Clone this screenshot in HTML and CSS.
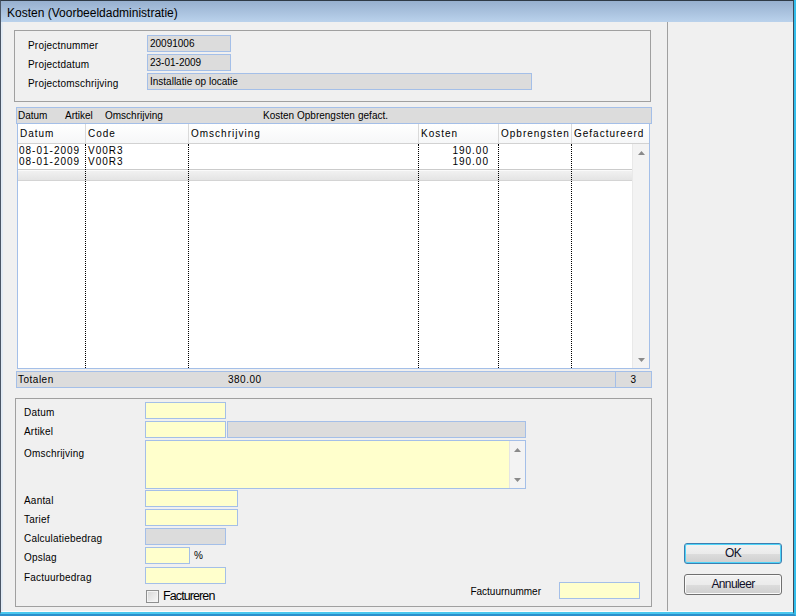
FILE: index.html
```html
<!DOCTYPE html>
<html>
<head>
<meta charset="utf-8">
<title>Kosten</title>
<link rel="stylesheet" href="styles.css">
</head>
<body>
<div class="window">
  <div class="frame">
    <div class="titlebar">Kosten (Voorbeeldadministratie)</div>
    <div class="client">
      <div class="main">
        <div class="group project">
          <div class="prow"><span class="lbl">Projectnummer</span><span class="fld ro w84">20091006</span></div>
          <div class="prow"><span class="lbl">Projectdatum</span><span class="fld ro w84">23-01-2009</span></div>
          <div class="prow"><span class="lbl">Projectomschrijving</span><span class="fld ro w385">Installatie op locatie</span></div>
        </div>

        <div class="listhead">
          <span class="lh1">Datum</span><span class="lh2">Artikel</span><span class="lh3">Omschrijving</span><span class="lh4">Kosten</span><span class="lh5">Opbrengsten</span><span>gefact.</span>
        </div>

        <div class="grid">
          <div class="ghead">
            <div class="hc c1">Datum</div>
            <div class="hc c2">Code</div>
            <div class="hc c3">Omschrijving</div>
            <div class="hc c4">Kosten</div>
            <div class="hc c5">Opbrengsten</div>
            <div class="hc c6h">Gefactureerd</div>
          </div>
          <div class="gbody">
            <div class="col c1"><div class="cell">08-01-2009</div><div class="cell">08-01-2009</div></div>
            <div class="col c2"><div class="cell">V00R3</div><div class="cell">V00R3</div></div>
            <div class="col c3"><div class="cell"></div><div class="cell"></div></div>
            <div class="col c4"><div class="cell num">190.00</div><div class="cell num">190.00</div></div>
            <div class="col c5"><div class="cell"></div><div class="cell"></div></div>
            <div class="col c6"><div class="cell"></div><div class="cell"></div></div>
            <div class="vscroll">
              <svg class="arrow" width="7" height="4" viewBox="0 0 7 4"><polygon points="3.5,0 7,4 0,4"/></svg>
              <svg class="arrow" width="7" height="4" viewBox="0 0 7 4"><polygon points="0,0 7,0 3.5,4"/></svg>
            </div>
          </div>
        </div>

        <div class="totals">
          <span class="tot-l">Totalen</span><span class="tot-v">380.00</span><span class="tot-n">3</span>
        </div>

        <div class="group entry">
          <span class="lbl r1">Datum</span>
          <span class="fld yl w81 r1 f2">&nbsp;</span>

          <span class="lbl r2">Artikel</span>
          <div class="pair r2 f23"><span class="fld yl w81"></span><span class="fld ro w299"></span></div>

          <span class="lbl r3 lbl-top">Omschrijving</span>
          <div class="memo r3 f23">
            <div class="memo-text"></div>
            <div class="memo-scroll">
              <svg class="arrow" width="7" height="4" viewBox="0 0 7 4"><polygon points="3.5,0 7,4 0,4"/></svg>
              <svg class="arrow" width="7" height="4" viewBox="0 0 7 4"><polygon points="0,0 7,0 3.5,4"/></svg>
            </div>
          </div>

          <span class="lbl r4">Aantal</span>
          <span class="fld yl w93 r4 f2"></span>

          <span class="lbl r5">Tarief</span>
          <span class="fld yl w93 r5 f2"></span>

          <span class="lbl r6">Calculatiebedrag</span>
          <span class="fld ro w81 r6 f2"></span>

          <span class="lbl r7">Opslag</span>
          <div class="pair r7 f23"><span class="fld yl w45"></span><span class="pct">%</span></div>

          <span class="lbl r8">Factuurbedrag</span>
          <span class="fld yl w81 r8 f2"></span>

          <label class="check r9 f23"><span class="box"></span><span class="check-text">Factureren</span></label>

          <div class="invoice">
            <span class="inv-lbl">Factuurnummer</span>
            <span class="fld yl w81"></span>
          </div>
        </div>
      </div>

      <div class="side">
        <button class="btn ok">OK</button>
        <button class="btn">Annuleer</button>
      </div>
    </div>
  </div>
</div>
</body>
</html>
```

FILE: styles.css
```css
* { box-sizing: border-box; }

html, body {
  margin: 0;
  padding: 0;
}

body {
  width: 796px;
  height: 616px;
  overflow: hidden;
  background: #f0f0f0;
  font-family: "Liberation Sans", Arial, sans-serif;
  font-size: 10px;
  color: #000;
}

.window {
  width: 796px;
  height: 616px;
  border-right: 2px solid #33bdea;
  border-bottom: 2px solid #2b8fcc;
}

.frame {
  width: 794px;
  height: 614px;
  border-top: 1px solid #2f3a46;
  border-left: 1px solid #4a5666;
  border-right: 1px solid #3a4a5c;
  border-bottom: 2px solid #49c8ef;
  display: flex;
  flex-direction: column;
}

.titlebar {
  height: 21px;
  flex: none;
  background: linear-gradient(#97b0cf, #bad2ec);
  padding: 4px 0 0 6px;
  line-height: 17px;
  font-size: 12px;
  white-space: nowrap;
  overflow: hidden;
}

.client {
  flex: 1;
  display: flex;
  border-left: 2px solid #e2ebf5;
  border-bottom: 1px solid #fbfbfb;
  background: #f0f0f0;
}

.main {
  width: 664px;
  flex: none;
  display: flex;
  flex-direction: column;
}

.side {
  flex: 1;
  border-left: 1px solid #a0a0a0;
  display: flex;
  flex-direction: column;
  justify-content: flex-end;
  gap: 10px;
  padding: 0 0 16px 16px;
}

/* group boxes */
.group {
  border: 1px solid #a0a0a0;
  width: 637px;
}

.project {
  margin: 8px 0 0 11px;
  padding: 4px 0 11px 13px;
  display: flex;
  flex-direction: column;
  gap: 2px;
}

.prow {
  display: flex;
  height: 17px;
}

.prow .lbl { width: 119px; }

.lbl {
  padding-top: 2px;
  line-height: 17px;
  white-space: nowrap;
  letter-spacing: 0.2px;
}

.fld {
  display: block;
  height: 17px;
  border: 1px solid #a4bfe8;
  padding: 1px 0 0 2px;
  line-height: 14px;
  white-space: nowrap;
  overflow: hidden;
}

.ro { background: #dcdcdc; }
.yl { background: #ffffcc; }

.w81 { width: 81px; }
.w84 { width: 84px; }
.w93 { width: 93px; }
.w45 { width: 45px; }
.w299 { width: 299px; }
.w385 { width: 385px; }

/* list header strip */
.listhead {
  margin: 5px 0 0 13px;
  width: 636px;
  height: 17px;
  border: 1px solid #a4bfe8;
  background: #dcdcdc;
  padding-left: 1px;
  line-height: 15px;
  white-space: nowrap;
}

.listhead span { display: inline-block; }
.lh1 { width: 47px; }
.lh2 { width: 40px; }
.lh3 { width: 158px; }
.lh4 { width: 34px; }
.lh5 { width: 61px; }

/* grid */
.grid {
  margin-left: 14px;
  width: 633px;
  border: 1px solid #a4bfe8;
  border-top: none;
  background: #fff;
  letter-spacing: 1px;
}

.ghead {
  display: flex;
  height: 20px;
  border-bottom: 1px solid #d2d2d2;
  background: linear-gradient(#ffffff, #f6f7f8);
}

.hc {
  line-height: 19px;
  padding-left: 2px;
  border-right: 1px solid #dadada;
  white-space: nowrap;
  overflow: hidden;
}

.c1 { width: 68px; }
.c2 { width: 103px; }
.c3 { width: 230px; }
.c4 { width: 80px; }
.c5 { width: 73px; }
.c6 { width: 60px; }
.c6h { width: 77px; border-right: none; }

.gbody {
  display: flex;
  height: 224px;
}

.col {
  padding-top: 1px;
  border-right: 1px dotted #000;
  background-color: #fff;
  background-image: linear-gradient(#cbcbcb 0 1px, #fafafa 1px 2px, #f1f1f1 2px, #e4e4e4 11px, #d4d4d4 11px 12px);
  background-repeat: no-repeat;
  background-origin: border-box;
  background-position: 0 25px;
  background-size: 100% 12px;
}

.c6 { border-right: none; }

.cell {
  height: 11px;
  line-height: 11px;
  white-space: nowrap;
}

.c1 .cell { padding-left: 1px; }
.c2 .cell { padding-left: 2px; }
.cell.num { text-align: right; padding-right: 9px; }

.vscroll {
  width: 17px;
  background: #f3f3f3;
  border-left: 1px solid #e9e9e9;
  display: flex;
  flex-direction: column;
  justify-content: space-between;
  align-items: center;
  padding: 7px 0 6px;
}

.arrow { display: block; fill: #8a8a8a; }

/* totals */
.totals {
  margin: 2px 0 0 13px;
  width: 636px;
  height: 17px;
  border: 1px solid #a4bfe8;
  background: #dcdcdc;
  display: flex;
  line-height: 15px;
  padding-left: 1px;
  letter-spacing: 0.5px;
}

.tot-l { width: 210px; }
.tot-v { flex: 1; }
.tot-n {
  width: 36px;
  border-left: 1px solid #a4bfe8;
  text-align: center;
}

/* entry form */
.entry {
  margin: 10px 0 0 12px;
  padding: 3px 0 3px 8px;
  display: grid;
  grid-template-columns: 121px 95px 1fr;
  grid-template-rows: 19px 19px 50px 19px 19px 19px 20px 23px 13px;
  align-items: start;
}

.entry .lbl { grid-column: 1; }
.lbl-top { padding-top: 5px; }

.f2 { grid-column: 2; }
.f23 { grid-column: 2 / 4; }

.r1 { grid-row: 1; }
.r2 { grid-row: 2; }
.r3 { grid-row: 3; }
.r4 { grid-row: 4; }
.r5 { grid-row: 5; }
.r6 { grid-row: 6; }
.r7 { grid-row: 7; }
.r8 { grid-row: 8; }
.r9 { grid-row: 9; }

.pair {
  display: flex;
  gap: 1px;
  align-items: center;
}

.pct {
  margin-left: 3px;
  font-size: 10px;
}

.memo {
  width: 381px;
  height: 49px;
  border: 1px solid #a4bfe8;
  background: #ffffcc;
  display: flex;
}

.memo-text { flex: 1; }

.memo-scroll {
  width: 16px;
  background: #f3f3f3;
  border-left: 1px solid #e4e4e4;
  display: flex;
  flex-direction: column;
  justify-content: space-between;
  align-items: center;
  padding: 7px 0 6px;
}

.check {
  display: flex;
  align-items: center;
  gap: 4px;
  height: 13px;
  padding-left: 1px;
}

.box {
  width: 13px;
  height: 13px;
  border: 1px solid #8e8f8f;
  background: linear-gradient(135deg, #d6d6d6, #f8f8f8);
  box-shadow: inset 0 0 0 1px #f4f4f4;
}

.check-text {
  font-family: "Liberation Sans", Arial, sans-serif;
  font-size: 12.5px;
  letter-spacing: -0.9px;
  line-height: 13px;
}

.invoice {
  grid-column: 3;
  grid-row: 8 / 10;
  justify-self: end;
  align-self: start;
  margin: 15px 11px 0 0;
  display: flex;
  align-items: center;
  gap: 18px;
}

.inv-lbl { padding-top: 1px; }

/* buttons */
.btn {
  width: 98px;
  height: 21px;
  padding: 0;
  border: 1px solid #707070;
  border-radius: 3px;
  background: linear-gradient(#f2f2f2 0%, #ebebeb 50%, #dddddd 50%, #cfcfcf 100%);
  box-shadow: inset 0 0 0 1px #fafafa;
  font-family: "Liberation Sans", Arial, sans-serif;
  font-size: 12px;
  letter-spacing: -0.6px;
  color: #101028;
  line-height: 19px;
}

.ok {
  border-color: #3c7fb1;
  box-shadow: inset 0 0 0 1px #4fd4f8;
}
```
